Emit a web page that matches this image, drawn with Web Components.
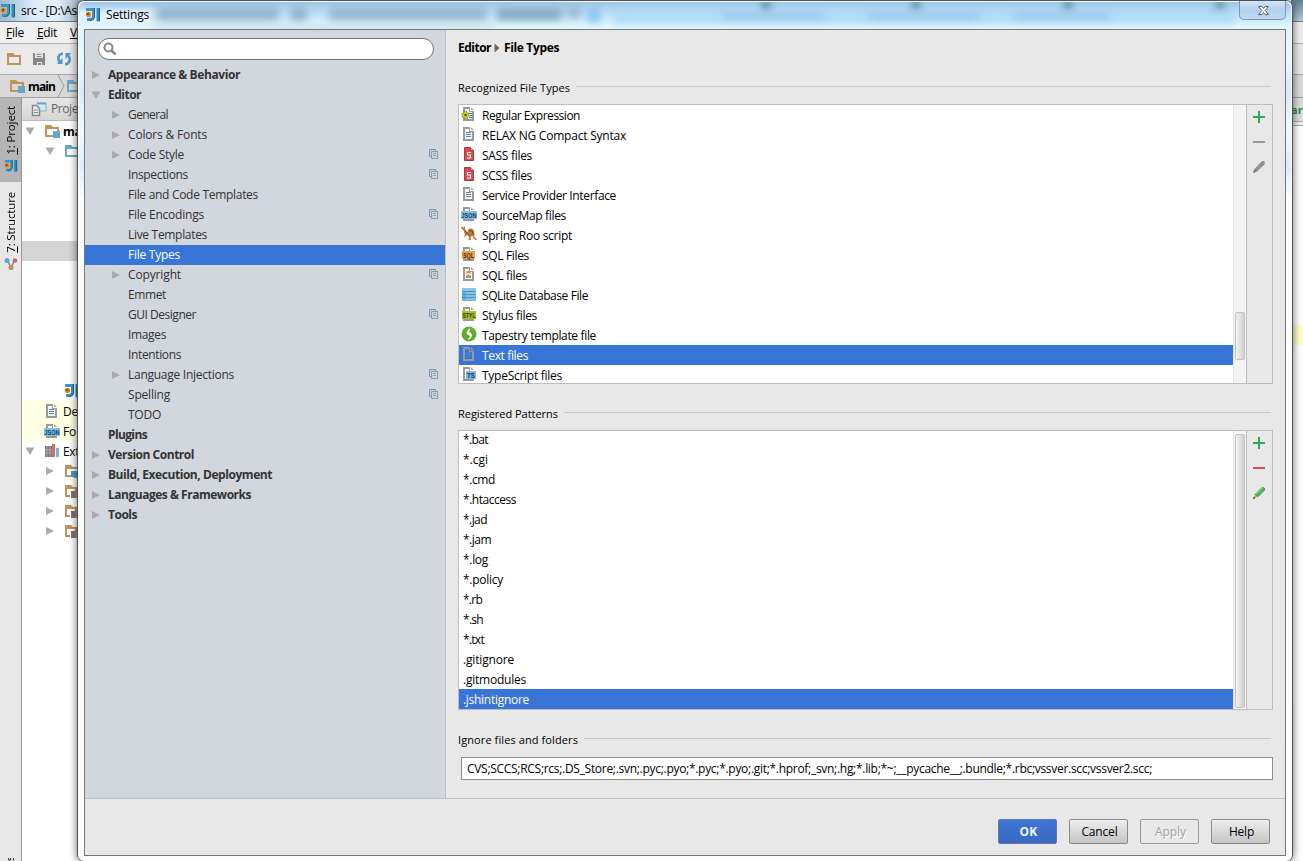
<!DOCTYPE html>
<html lang="en">
<head>
<meta charset="utf-8">
<title>Settings</title>
<style>
    html, body { margin: 0; padding: 0; }
    body {
        width: 1303px;
        height: 861px;
        overflow: hidden;
        position: relative;
        background: #fff;
        font: 12px/20px "Open Sans", "Noto Sans", sans-serif;
        color: #000;
    }
</style>
</head>
<body>
<ide-window></ide-window>
<settings-dialog></settings-dialog>

<script>
// 1. Icons
const folder = (color) => `<path d="M1 2h6l2 2h6v10H1zM3 6v6h10V6z" fill="${color}" fill-rule="evenodd"/>`;
const sheet = '<path d="M2 1h7v4h4v10H2z" fill="#999"/><path d="M4 3h4v3h3v7H4z" fill="#f7f7f7"/><path d="M10 1l3 3h-3z" fill="#aaa"/>';
const label = (text, color, x, w, len, ink) => `
    <rect x="${x}" y="5" width="${w}" height="8" fill="${color}"/>
    <text x="${x + w / 2}" y="11.6" text-anchor="middle" textLength="${len}" lengthAdjust="spacingAndGlyphs"
        font-family="Liberation Sans, sans-serif" font-weight="700" font-size="7.5" fill="${ink}">${text}</text>`;

const icons = {
    logo: '<path d="M1 1h9v8c0 3-2 5-5 5H2v-3h3c1.5 0 2-1 2-2V4H1z" fill="#3b95c4"/><rect x="11.5" y="1" width="3.5" height="13.5" rx="1" fill="#3189bb"/><path d="M9.5 1v8c0 3-2 4.5-5 4.5M14.5 1v13" stroke="#17658f" fill="none"/><circle cx="3.5" cy="7.5" r="2.7" fill="#e08b1c"/><circle cx="3" cy="7" r="1.2" fill="#8b4500"/>',
    text: sheet + '<path d="M5 6.5h5M5 8.5h5M5 10.5h5" stroke="#4a8cb0"/>',
    textSel: '<path d="M2 1h7v4h4v10H2zM4 3v10h7V6H8V3z" fill="#999" fill-rule="evenodd"/><path d="M10 1l3 3h-3z" fill="#999"/><path d="M5 6.5h5M5 8.5h5M5 10.5h5" stroke="#3d8fc4"/>',
    regex: sheet + '<path d="M8 7.5h3M9 9.5h2M8 11.5h3" stroke="#4a6cb0"/><circle cx="4.5" cy="9" r="3.3" fill="#c8c51b"/><circle cx="4.5" cy="9" r="3.6" fill="none" stroke="#5d5d04" stroke-dasharray="1.5 1.3"/><circle cx="4.5" cy="9" r="1.1" fill="#333"/>',
    sass: '<path d="M3.5 1.5h6l3 3v10h-9z" fill="#e0484f" stroke="#a33a40"/><path d="M9.5 1.5v3h3" fill="#f4c6c6" stroke="#a33a40"/><path d="M10 6.500H6.500v2.500h3V12H6" fill="none" stroke="#fff" stroke-width="1.200"/>',
    json: sheet + label('JSON', '#7cc1ee', 0, 16, 15, '#203a50'),
    sql: sheet + label('SQL', '#e9a24c', 1, 13, 11, '#42300f'),
    styl: sheet + label('STYL', '#a3c224', 1, 14, 13, '#2d3a05'),
    ts: sheet + label('TS', '#7cb9ea', 5, 10, 8, '#1c3348'),
    sqlUser: sheet + '<rect x="5.5" y="5" width="4" height="3" fill="#e2912e"/><rect x="6" y="7" width="3" height="2" fill="#f5cb97"/><path d="M5 9.5h5v2.500H5z" fill="#4a9bd0"/><path d="M6.500 9h2v3h-2z" fill="#e2912e"/>',
    roo: '<path d="M0 2l1-1.500 1.500 1L4 .5V3l2 3 2-3c2-1 4-.5 5 2 .8 2 0 5 .5 6.500L16 13l-1 1.200-2.500-1.700-1-3-2 1.500L10 14H7.500l.5-3-1-2-2.500 1-2 1.500L4 8.500 2.500 4.500z" fill="#b67a38"/><path d="M8 4l3 1 1.500 4M4 5l3 3 2 2" stroke="#7e4d1a" fill="none"/>',
    db: '<rect x="1" y="2" width="14" height="13" rx="1" fill="#65b0d8"/><rect x="1" y="2" width="14" height="3" fill="#89c6e6"/><path d="M1 5.5h14M1 8.5h14M1 11.5h14" stroke="#4a93bb"/><path d="M5 7h10M5 10h10M5 13h10" stroke="#a7d7ef"/>',
    tapestry: '<circle cx="8" cy="8" r="7.5" fill="#64ad2c"/><path d="M9.500 2C6 4 5 6 6 8l3 2-2 4c4-2 5-5 3-7L8 6z" fill="#fff"/>',
    plus: '<path d="M8 2v12M2 8h12" stroke="#35a853" stroke-width="2"/>',
    minus: '<path d="M2 8h12" stroke="#999" stroke-width="2"/>',
    minusRed: '<path d="M2 8h12" stroke="#cf5546" stroke-width="2"/>',
    pencil: '<path d="M3.5 10l6-6.5c1-1 3-2 4-1s0 3-1 4l-6.5 6L2 14z" fill="#929292"/><path d="M2 14l1.5-4L6 12.5z" fill="#777"/>',
    pencilGreen: '<path d="M4 9.5l7-7c1-.7 3.5 1.3 2.5 2.5l-7 7z" fill="#46b44f" stroke="#2c7f35" stroke-width=".7"/><path d="M5 9l7-6.5" stroke="#9be59f"/><path d="M4 9.5L6.5 12 2 14z" fill="#e8b070"/><path d="M2 14l1-2.5L4.5 13z" fill="#333"/>',
    copy: '<path d="M6 9.5H4.5v-7h6V4" fill="none" stroke="#579bbf"/><rect x="6.5" y="4.5" width="6" height="7" fill="none" stroke="#999"/><path d="M8 6.5h3M8 8.5h3" stroke="#999"/>',
    right: '<path d="M4 4l8 4-8 4z" fill="#aaa"/>',
    down: '<path d="M3.5 4.5h9L8 12z" fill="#aaa"/>',
    folder: folder('#c1955a'),
    module: folder('#c1955a') + '<rect x="9" y="8" width="7" height="7" fill="#62a6c9"/>',
    source: folder('#6aa8c8'),
    jar: folder('#c1955a') + '<path d="M6 7h10v8H6z" fill="#fff"/><path d="M7 8h4v7H7z" fill="#777"/><path d="M11 6h3v9h-3z" fill="#d47777"/>',
    jdk: folder('#c1955a') + '<path d="M7 8h9v6c-4 2-8 1-9-2z" fill="#489dca"/>',
    libs: '<path d="M1 3h7v11H1z" fill="#777"/><path d="M3 3v11M6 3v11M1 7h7M1 10h7" stroke="#aaa"/><rect x="8" y="1" width="3" height="13" fill="#e06666"/><rect x="12" y="5" width="3" height="9" fill="#73b6d7"/>',
    save: '<path d="M2 2h2v5h8V2h2v12h-3v-3H6v3H2z" fill="#888"/><path d="M6 2h5v4H6z" fill="#f7f7f7" stroke="#aaa" stroke-width=".5"/><path d="M6 3.5h4M6 5.5h4" stroke="#888"/><rect x="7" y="12" width="3" height="2" fill="#4a9ac6"/>',
    sync: '<path d="M7 2.5C2 3 1 8 4 11M9 13.5c5-.5 6-6 3-9" fill="none" stroke="#5597bd" stroke-width="2.5"/><path d="M1 13h5.5V7zM15 2H9.5v6z" fill="#5597bd"/>',
    project: '<path d="M6 2h9v8H9" fill="#d9eaf2" stroke="#86b3ca"/><path d="M6 2.5h9" stroke="#6ea6c3" stroke-width="2"/><path d="M1.5 4.5h4l3 3v7h-7z" fill="#eee" stroke="#888" stroke-width="1.5"/><path d="M3 9h4M3 11.5h4" stroke="#888"/>',
    structure: '<path d="M4 4l4 8 4-8" fill="none" stroke="#777" stroke-width="1.5"/><circle cx="3.5" cy="4" r="2.9" fill="#62a6cf"/><circle cx="12.5" cy="4" r="2.7" fill="#d66363"/><circle cx="8" cy="12" r="2.9" fill="#c78d4d"/>',
    search: '<circle cx="5.5" cy="6.5" r="4" fill="none" stroke="#888" stroke-width="2"/><path d="M8.5 9.5l4 4" stroke="#888" stroke-width="2.5"/>',
    crumb: '<path d="M5.5 3.5l5 4.5-5 4.5z" fill="#666"/>',
    close: '<path d="M2 3h4l2 2.500L10 3h4l-3.700 5 3.700 5h-4l-2-2.500L6 13H2l3.700-5z" fill="#fff" stroke="#4c5968" stroke-width="1.200"/>'
};

class IdeIcon extends HTMLElement {
    connectedCallback() {
        const size = this.getAttribute('size') || 16;
        this.attachShadow({ mode: 'open' }).innerHTML = `
        <style>
            :host { display: block; flex: none; width: ${size}px; height: ${size}px; }
            svg { display: block; }
        </style>
        <svg width="${size}" height="${size}" viewBox="0 0 16 16">${icons[this.getAttribute('name')] || ''}</svg>`;
    }
}
customElements.define('ide-icon', IdeIcon);

// 2. Text label, tracked so that it fills the width given in px
class FitText extends HTMLElement {
    connectedCallback() {
        this.attachShadow({ mode: 'open' }).innerHTML = `
        <style>
            :host { display: inline-block; flex: none; white-space: nowrap; }
        </style>
        <slot></slot>`;
        const target = Number(this.getAttribute('w'));
        if (!target) return;
        const natural = this.getBoundingClientRect().width;
        this.style.letterSpacing = `${(target - natural) / this.textContent.length}px`;
    }
}
customElements.define('fit-text', FitText);

// 3. Settings tree: [level, label, width, arrow, has project copy]
const treeRows = [
    [0, 'Appearance &amp; Behavior', 132, 'right'],
    [0, 'Editor', 33, 'down'],
    [1, 'General', 40, 'right'],
    [1, 'Colors &amp; Fonts', 79, 'right'],
    [1, 'Code Style', 56, 'right', true],
    [1, 'Inspections', 60, '', true],
    [1, 'File and Code Templates', 130],
    [1, 'File Encodings', 76, '', true],
    [1, 'Live Templates', 79],
    [1, 'File Types', 52],
    [1, 'Copyright', 53, 'right', true],
    [1, 'Emmet', 38],
    [1, 'GUI Designer', 68, '', true],
    [1, 'Images', 38],
    [1, 'Intentions', 53],
    [1, 'Language Injections', 106, 'right', true],
    [1, 'Spelling', 42, '', true],
    [1, 'TODO', 33],
    [0, 'Plugins', 39],
    [0, 'Version Control', 86, 'right'],
    [0, 'Build, Execution, Deployment', 164, 'right'],
    [0, 'Languages &amp; Frameworks', 143, 'right'],
    [0, 'Tools', 29, 'right']
];

class SettingsTree extends HTMLElement {
    connectedCallback() {
        this.attachShadow({ mode: 'open' }).innerHTML = `
        <style>
            :host { display: block; color: #333; }
            .row { display: flex; align-items: center; height: 20px; padding: 0 4px 0 3px; }
            .row.child { padding-left: 23px; }
            .row.top { font-weight: 700; }
            .row.selected { background: #3875d7; color: #fff; }
            fit-text { margin-left: 4px; }
            .copy { margin-left: auto; }
        </style>
        ${treeRows.map(([level, text, w, arrow, copy]) => `
        <div class="row ${level ? 'child' : 'top'} ${text === 'File Types' ? 'selected' : ''}">
            <ide-icon name="${arrow || ''}"></ide-icon>
            <fit-text w="${w}">${text}</fit-text>
            ${copy ? '<ide-icon class="copy" name="copy"></ide-icon>' : ''}
        </div>`).join('')}`;
    }
}
customElements.define('settings-tree', SettingsTree);

// 4. Titled section line
class SectionTitle extends HTMLElement {
    connectedCallback() {
        this.attachShadow({ mode: 'open' }).innerHTML = `
        <style>
            :host { display: flex; align-items: center; height: 20px; gap: 6px; font-size: 11px; padding-right: 2px; }
            i { flex: 1; height: 1px; background: #c8c8c8; margin-bottom: 3px; }
        </style>
        <fit-text w="${this.getAttribute('w')}">${this.getAttribute('label')}</fit-text><i></i>`;
    }
}
customElements.define('section-title', SectionTitle);

// 5. List with a scrollbar and an add / remove / edit bar
class ListPanel extends HTMLElement {
    connectedCallback() {
        const [top, height] = this.getAttribute('thumb').split(' ');
        const tools = this.getAttribute('tools').split(' ');
        this.attachShadow({ mode: 'open' }).innerHTML = `
        <style>
            :host { display: flex; height: 278px; border: 1px solid #bdbdbd; overflow: hidden; }
            .rows { flex: 1; background: #fff; overflow: hidden; }
            .scroll { width: 9px; padding: 0 2px 0 1px; background: #f4f4f4; border-left: 1px solid #e4e4e4; }
            .thumb {
                box-sizing: border-box; width: 10px; height: ${height}px; margin-top: ${top}px;
                border: 1px solid #c2c2c2; border-radius: 2px;
                background: linear-gradient(90deg, #f3f3f3, #cfcfcf);
            }
            .tools {
                box-sizing: border-box; width: 26px; border-left: 1px solid #bdbdbd; padding: 4px 2px 0 0;
                display: flex; flex-direction: column; align-items: center; gap: 9px;
            }
        </style>
        <div class="rows"><slot></slot></div>
        <div class="scroll"><div class="thumb"></div></div>
        <div class="tools">${tools.map((name) => `<ide-icon name="${name}"></ide-icon>`).join('')}</div>`;
    }
}
customElements.define('list-panel', ListPanel);

class ListRow extends HTMLElement {
    connectedCallback() {
        const icon = this.getAttribute('icon');
        this.attachShadow({ mode: 'open' }).innerHTML = `
        <style>
            :host { display: flex; align-items: center; height: 20px; padding-left: ${icon ? 2 : 4}px; gap: 5px; }
            :host([selected]) { background: #3875d7; color: #fff; }
            fit-text { margin-top: 1px; }
            ide-icon { margin-top: -2px; }
        </style>
        ${icon ? `<ide-icon name="${icon}"></ide-icon>` : ''}
        <fit-text w="${this.getAttribute('w')}">${this.getAttribute('label')}</fit-text>`;
    }
}
customElements.define('list-row', ListRow);

// 6. Dialog button
class DialogButton extends HTMLElement {
    connectedCallback() {
        this.attachShadow({ mode: 'open' }).innerHTML = `
        <style>
            :host {
                box-sizing: border-box; display: flex; align-items: center; justify-content: center;
                width: 59px; height: 25px; padding-left: 2px;
                border: 1px solid #8a8a8a; border-radius: 2px;
                background: linear-gradient(#eee, #c4c4c4);
            }
            :host([primary]) { background: linear-gradient(#3c75d2, #3a69c4); border-color: #6878a0; color: #f2f4fa; font-weight: 700; }
            :host([disabled]) { background: #e8e8e8; border-color: #999; color: #a0a0a0; text-shadow: 1px 1px #fff; }
        </style>
        <fit-text w="${this.getAttribute('w')}">${this.getAttribute('label')}</fit-text>`;
    }
}
customElements.define('dialog-button', DialogButton);

const fileTypes = [
    ['regex', 'Regular Expression', 98],
    ['text', 'RELAX NG Compact Syntax', 144],
    ['sass', 'SASS files', 50],
    ['sass', 'SCSS files', 50],
    ['text', 'Service Provider Interface', 134],
    ['json', 'SourceMap files', 84],
    ['roo', 'Spring Roo script', 90],
    ['sql', 'SQL Files', 47],
    ['sqlUser', 'SQL files', 45],
    ['db', 'SQLite Database File', 106],
    ['styl', 'Stylus files', 55],
    ['tapestry', 'Tapestry template file', 114],
    ['textSel', 'Text files', 46],
    ['ts', 'TypeScript files', 80]
];

const patterns = [
    ['*.bat', 25], ['*.cgi', 25], ['*.cmd', 32], ['*.htaccess', 53], ['*.jad', 24],
    ['*.jam', 28], ['*.log', 25], ['*.policy', 40], ['*.rb', 19], ['*.sh', 20],
    ['*.txt', 21], ['.gitignore', 51], ['.gitmodules', 63], ['.jshintignore', 66]
];

// 7. The dialog
class SettingsDialog extends HTMLElement {
    connectedCallback() {
        this.attachShadow({ mode: 'open' }).innerHTML = `
        <style>
            :host {
                position: absolute; left: 77px; top: 0; z-index: 2;
                box-sizing: border-box; width: 1216px; height: 862px; padding: 0 6px;
                border: 1px solid #4d555c; border-radius: 7px;
                background:
                    linear-gradient(90deg, rgba(255,255,255,.5), rgba(255,255,255,0) 50%) 0 28px / 7px 834px no-repeat,
                    linear-gradient(#d9ecfa, #e6fafe 60px, #d7e8f8 90px, #f0fbfd 130px, #dcebf9 165px, #fff 200px, #fff 700px, #fdfdfd);
                box-shadow: 0 0 9px rgba(0,0,0,.6), inset 0 0 0 1px rgba(255,255,255,.75);
            }
            .glass { position: absolute; left: 1px; top: 1px; width: 1212px; height: 28px; border-radius: 6px 6px 0 0; }
            .bar { position: relative; display: flex; align-items: center; height: 28px; }
            .bar ide-icon { margin-left: 1px; }
            .bar fit-text { margin-left: 5px; }
            .close {
                margin: 0 0 9px auto; width: 45px; height: 18px;
                border: 1px solid #7f94ad; border-top: 0; border-radius: 0 0 5px 5px;
                background: linear-gradient(#d3e5f6, #b3d0ec 50%, #bcdaf2);
                display: flex; align-items: center; justify-content: center;
            }
            .bar .close ide-icon { margin: 0 0 0 1px; }
            .body { position: relative; border: 1px solid #777; height: 825px; background: #e8e8e8; }
            .columns { display: flex; height: 768px; border-bottom: 1px solid #bdbdbd; }
            .side { width: 360px; background: #d2d6dd; border-right: 1px solid #bcbcc0; padding-top: 8px; }
            .search {
                box-sizing: border-box; width: 336px; height: 22px; margin: 0 0 5px 13px; padding: 2px 4px;
                background: #fff; border: 1px solid #747474; border-radius: 11px;
            }
            .main { flex: 1; padding: 8px 12px 0; }
            .crumbs { display: flex; align-items: center; height: 20px; font-weight: 700; margin-bottom: 20px; }
            .crumbs ide-icon { margin: 0 -1px 0 -2px; }
            list-panel { margin: 6px 0 20px; }
            .patterns { margin-top: -2px; }
            .field {
                box-sizing: border-box; height: 23px; margin: 7px 0 0 3px; padding: 0 5px;
                border: 1px solid #8c8c8c; background: #fff; line-height: 21px;
            }
            .buttons { display: flex; justify-content: flex-end; gap: 12px; padding: 20px 15px 0 0; }
        </style>
        <svg class="glass" width="1212" height="28">
            <defs>
                <linearGradient id="g" x2="0" y2="1">
                    <stop offset="0" stop-color="#9fc5e4"/><stop offset=".3" stop-color="#b6d9f3"/>
                    <stop offset=".7" stop-color="#d3effc"/><stop offset="1" stop-color="#e6fdff"/>
                </linearGradient>
                <filter id="b" x="-20%" y="-80%" width="140%" height="260%"><feGaussianBlur stdDeviation="4 3"/></filter>
            </defs>
            <rect width="1212" height="28" rx="5" fill="url(#g)"/>
            <g filter="url(#b)">
                <rect x="-10" y="8" width="90" height="16" fill="#e4f1fb"/>
                <rect x="75" y="6" width="125" height="13" fill="#7793ad" opacity=".55"/>
                <rect x="212" y="6" width="16" height="13" fill="#7793ad" opacity=".6"/>
                <rect x="250" y="6" width="158" height="13" fill="#7793ad" opacity=".5"/>
                <rect x="418" y="6" width="65" height="13" fill="#66839c" opacity=".55"/>
                <rect x="489" y="5" width="12" height="12" fill="#7793ad" opacity=".5"/>
                <rect x="75" y="25" width="340" height="3" fill="#9bb5c5" opacity=".6"/>
                <rect x="509" y="5" width="12" height="16" fill="#7dbcf0" opacity=".8"/>
                <rect x="535" y="2" width="620" height="21" fill="#a5d5f6" opacity=".6"/>
                <rect x="645" y="10" width="100" height="9" fill="#7baed3" opacity=".35"/>
                <rect x="790" y="10" width="110" height="9" fill="#7baed3" opacity=".35"/>
                <rect x="935" y="10" width="95" height="9" fill="#7baed3" opacity=".35"/>
                <circle cx="687" cy="3" r="4.5" fill="#3b7f7d"/><circle cx="837" cy="3" r="4.5" fill="#3b7f7d"/>
                <circle cx="989" cy="3" r="4.5" fill="#3b7f7d"/><circle cx="1141" cy="3" r="4.5" fill="#3b7f7d"/>
            </g>
        </svg>
        <div class="bar">
            <ide-icon name="logo"></ide-icon>
            <fit-text w="43">Settings</fit-text>
            <div class="close"><ide-icon name="close" size="13"></ide-icon></div>
        </div>
        <div class="body">
            <div class="columns">
                <div class="side">
                    <div class="search"><ide-icon name="search"></ide-icon></div>
                    <settings-tree></settings-tree>
                </div>
                <div class="main">
                    <div class="crumbs"><fit-text w="33">Editor</fit-text><ide-icon name="crumb"></ide-icon><fit-text w="55">File Types</fit-text></div>
                    <section-title label="Recognized File Types" w="112"></section-title>
                    <list-panel thumb="207 48" tools="plus minus pencil">
                        ${fileTypes.map(([icon, text, w]) => `<list-row icon="${icon}" label="${text}" w="${w}" ${text === 'Text files' ? 'selected' : ''}></list-row>`).join('')}
                    </list-panel>
                    <section-title label="Registered Patterns" w="100"></section-title>
                    <list-panel thumb="3 274" tools="plus minusRed pencilGreen">
                        <div class="patterns">
                            ${patterns.map(([text, w]) => `<list-row label="${text}" w="${w}" ${text === '.jshintignore' ? 'selected' : ''}></list-row>`).join('')}
                        </div>
                    </list-panel>
                    <section-title label="Ignore files and folders" w="120"></section-title>
                    <div class="field"><fit-text w="685">CVS;SCCS;RCS;rcs;.DS_Store;.svn;.pyc;.pyo;*.pyc;*.pyo;.git;*.hprof;_svn;.hg;*.lib;*~;__pycache__;.bundle;*.rbc;vssver.scc;vssver2.scc;</fit-text></div>
                </div>
            </div>
            <div class="buttons">
                <dialog-button primary label="OK" w="18"></dialog-button>
                <dialog-button label="Cancel" w="36"></dialog-button>
                <dialog-button disabled label="Apply" w="31"></dialog-button>
                <dialog-button label="Help" w="25"></dialog-button>
            </div>
        </div>`;
    }
}
customElements.define('settings-dialog', SettingsDialog);

// 8. IDE window behind the dialog: [indent, arrow, icon, label, background]
const projectRows = [
    [0, 'down', 'module', '<b>ma</b>'],
    [20, 'down', 'source', ''],
    [], [], [], [],
    [0, '', '', '', '#d4d4d4'],
    [], [], [], [], [], [],
    [20, '', 'logo', ''],
    [0, '', 'text', 'De', '#ffffe4'],
    [0, '', 'json', 'Fo', '#ffffe4'],
    [0, 'down', 'libs', 'Ext'],
    [20, 'right', 'jdk', ''],
    [20, 'right', 'jar', ''],
    [20, 'right', 'jar', ''],
    [20, 'right', 'jar', '']
];

class IdeWindow extends HTMLElement {
    connectedCallback() {
        this.attachShadow({ mode: 'open' }).innerHTML = `
        <style>
            :host { display: flex; justify-content: space-between; width: 1303px; height: 861px; overflow: hidden; }
            .left { width: 82px; display: flex; flex-direction: column; overflow: hidden; }
            .right { width: 12px; display: flex; flex-direction: column; overflow: hidden; }
            .left > div, .right > div { box-sizing: border-box; flex: none; }
            .title { height: 22px; display: flex; align-items: center; gap: 5px; border-bottom: 1px solid #6e7d88; background: linear-gradient(90deg, #9cb9cc, #dbeafa 40%, #e4effa 70%, #9fb4c2); }
            .right .title { background: linear-gradient(#5f7f92, #b5cad6); }
            .menu { height: 22px; display: flex; gap: 13px; padding-left: 6px; border-bottom: 1px solid #b4b4b4; background: #f0f0f0; line-height: 22px; }
            .toolbar { height: 31px; display: flex; align-items: center; gap: 9px; padding-left: 6px; border-bottom: 1px solid #ababab; background: #e9e9e9; }
            .nav { height: 23px; display: flex; align-items: center; padding-left: 9px; border-bottom: 1px solid #a0a0a0; background: #d9d9d9; font-weight: 700; }
            .nav fit-text { margin: 1px 0 0 3px; }
            .left > .work { flex: 1; display: flex; }
            .stripe { box-sizing: border-box; width: 22px; flex: none; background: #e8e8e8; border-right: 1px solid #999; display: flex; flex-direction: column; }
            .tab { box-sizing: border-box; display: flex; flex-direction: column; align-items: center; height: 84px; padding-top: 8px; gap: 4px; }
            .tab + .tab { padding-top: 10px; }
            .tab.active { background: #b5b5b5; }
            .tab span, .cut { writing-mode: vertical-rl; transform: rotate(180deg); line-height: 18px; font-size: 11.5px; letter-spacing: -.15px; white-space: nowrap; }
            .cut { margin: auto auto 0 1px; height: 3px; overflow: hidden; }
            .tree { flex: 1; background: #fff; overflow: hidden; }
            .head { height: 22px; display: flex; align-items: center; gap: 4px; padding-left: 9px; border-bottom: 1px solid #bbb; background: linear-gradient(#e8e8e8, #d4d4d4); color: #666; }
            .row { display: flex; align-items: center; height: 20px; white-space: nowrap; }
            .row .pic { margin-left: 6px; }
            .row span { margin: 1px 0 0 3px; letter-spacing: -.3px; }
            .editorTab { height: 23px; background: #ddd; color: #2c9140; font-weight: 700; font-size: 11px; line-height: 24px; }
            .line { height: 5px; background: #eee; border: solid #aaa; border-width: 1px 0; }
            .mark { height: 20px; margin-top: 199px; background: #ffffce; }
        </style>
        <div class="left">
            <div class="title"><ide-icon name="logo"></ide-icon><fit-text w="56">src - [D:\\As</fit-text></div>
            <div class="menu"><fit-text w="18"><u>F</u>ile</fit-text><fit-text w="20"><u>E</u>dit</fit-text><fit-text><u>V</u></fit-text></div>
            <div class="toolbar"><ide-icon name="folder"></ide-icon><ide-icon name="save"></ide-icon><ide-icon name="sync"></ide-icon></div>
            <div class="nav">
                <ide-icon name="module"></ide-icon><fit-text w="27">main</fit-text>
                <svg width="11" height="22"><path d="M3 0l6 11-6 11" fill="none" stroke="#999"/></svg>
                <ide-icon name="source"></ide-icon>
            </div>
            <div class="work">
                <div class="stripe">
                    <div class="tab active"><span><u>1</u>: Project</span><ide-icon name="logo" size="14"></ide-icon></div>
                    <div class="tab"><span><u>7</u>: Structure</span><ide-icon name="structure" size="14"></ide-icon></div>
                    <div class="cut">s</div>
                </div>
                <div class="tree">
                    <div class="head"><ide-icon name="project"></ide-icon><fit-text w="27">Proje</fit-text></div>
                    ${projectRows.map(([indent = 0, arrow, pic, text, fill]) => `
                    <div class="row" style="padding-left: ${indent}px; background: ${fill || 'none'}">
                        <ide-icon name="${arrow || ''}"></ide-icon>
                        ${pic ? `<ide-icon class="pic" name="${pic}"></ide-icon>` : ''}
                        ${text ? `<span>${text}</span>` : ''}
                    </div>`).join('')}
                </div>
            </div>
        </div>
        <div class="right">
            <div class="title"></div>
            <div class="menu"></div>
            <div class="toolbar"></div>
            <div class="nav"></div>
            <div class="editorTab">arc</div>
            <div class="line"></div>
            <div class="mark"></div>
        </div>`;
    }
}
customElements.define('ide-window', IdeWindow);
</script>
</body>
</html>
